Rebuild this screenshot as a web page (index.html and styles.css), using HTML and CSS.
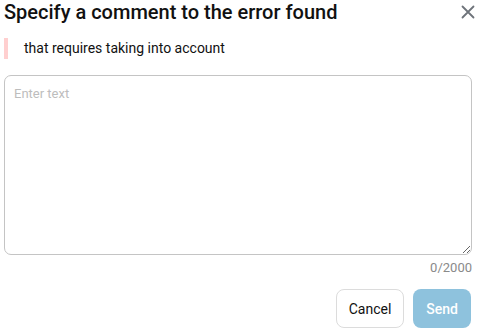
FILE: index.html
```html
<!DOCTYPE html>
<html>
<head>
<meta charset="utf-8">
<link rel="stylesheet" href="styles.css">
</head>
<body>
<div class="dialog">
  <div class="header">
    <h1 class="title">Specify a comment to the error found</h1>
    <button class="close" aria-label="Close">
      <svg width="14" height="14" viewBox="0 0 14 14"><path d="M1.5 1.5L12.5 12.5M12.5 1.5L1.5 12.5" stroke="#6e737a" stroke-width="1.8" stroke-linecap="round"/></svg>
    </button>
  </div>
  <div class="quote">that requires taking into account</div>
  <textarea class="input" placeholder="Enter text"></textarea>
  <div class="counter">0/2000</div>
  <div class="actions">
    <button class="btn cancel">Cancel</button>
    <button class="btn send">Send</button>
  </div>
</div>
</body>
</html>
```
FILE: styles.css
```css
* { box-sizing: border-box; }
html, body { margin: 0; padding: 0; background: #fff; }
body { font-family: Roboto, "Liberation Sans", sans-serif; color: #1a1a1a; }
.dialog { padding: 0 6px 0 4px; display: flex; flex-direction: column; }
.header { display: flex; align-items: center; justify-content: space-between; height: 24px; }
.title { margin: 0; font-size: 20px; font-weight: 500; line-height: 24px; color: #111; }
.close { border: 0; background: none; padding: 0; margin-right: -4px; width: 16px; height: 16px; display: flex; align-items: center; justify-content: center; cursor: pointer; }
.quote { margin-top: 14px; height: 21px; border-left: 4px solid #ffcfcf; padding-left: 16px; font-size: 14px; line-height: 21px; color: #111; }
.input { margin-top: 16px; width: 100%; height: 180px; border: 1px solid #c4c4c4; border-radius: 7px; padding: 10px 9px; font-family: Roboto, "Liberation Sans", sans-serif; font-size: 13px; resize: vertical; outline: none; }
.input::placeholder { color: #bdbdbd; }
.counter { text-align: right; font-size: 13px; color: #8a8a8a; margin-top: 5px; line-height: 15px; }
.actions { display: flex; justify-content: flex-end; gap: 9px; margin-top: 14px; padding-right: 1px; }
.btn { height: 39px; border-radius: 8px; font-family: Roboto, "Liberation Sans", sans-serif; font-size: 14px; cursor: pointer; }
.cancel { width: 68px; background: #fff; border: 1px solid #dcdcdc; color: #111; }
.send { width: 58px; background: #8ec2dd; border: 0; color: #fff; font-weight: 500; }
```
